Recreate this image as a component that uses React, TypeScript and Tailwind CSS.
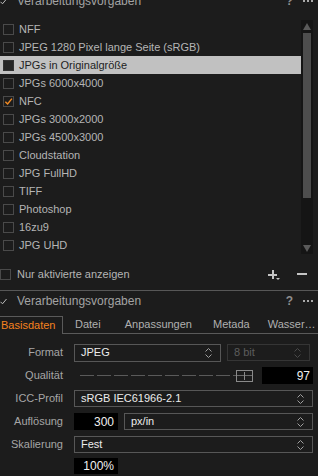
import React from "react";

const presets = [
  "NFF",
  "JPEG 1280 Pixel lange Seite (sRGB)",
  "JPGs in Originalgröße",
  "JPGs 6000x4000",
  "NFC",
  "JPGs 3000x2000",
  "JPGs 4500x3000",
  "Cloudstation",
  "JPG FullHD",
  "TIFF",
  "Photoshop",
  "16zu9",
  "JPG UHD",
];

function Check({ color = "#f08a24", className = "" }: { color?: string; className?: string }) {
  return (
    <svg viewBox="0 0 10 10" className={className}>
      <path d="M1.5 5.2 L4 7.8 L8.8 1.8" fill="none" stroke={color} strokeWidth="1.6" />
    </svg>
  );
}

function Chevrons({ color = "#9a9a9a" }: { color?: string }) {
  return (
    <svg viewBox="0 0 9 12" className="w-[9px] h-[12px]">
      <path d="M1.5 4.5 L4.5 1.5 L7.5 4.5" fill="none" stroke={color} strokeWidth="1" />
      <path d="M1.5 7.5 L4.5 10.5 L7.5 7.5" fill="none" stroke={color} strokeWidth="1" />
    </svg>
  );
}

function PanelHeader() {
  return (
    <div className="flex items-center h-[20px] shrink-0">
      <svg viewBox="0 0 7 7" className="w-[7px] h-[7px]">
        <path d="M0.5 3.8 L2.5 5.8 L6.5 1" fill="none" stroke="#bdbdbd" strokeWidth="1" />
      </svg>
      <span className="ml-[10px] text-[12px] text-[#a3a3a3]">Verarbeitungsvorgaben</span>
      <span className="ml-auto text-[12px] font-bold text-[#8e8e8e] mr-[10px]">?</span>
      <span className="flex gap-[2px] mr-[5px]">
        <span className="w-[2px] h-[2px] bg-[#aaaaaa]" />
        <span className="w-[2px] h-[2px] bg-[#aaaaaa]" />
        <span className="w-[2px] h-[2px] bg-[#aaaaaa]" />
      </span>
    </div>
  );
}

function Select({ value, className = "", disabled = false }: { value: string; className?: string; disabled?: boolean }) {
  return (
    <div
      className={`flex items-center h-[17px] border pl-[6px] pr-[7px] ${
        disabled ? "border-[#353535] text-[#5c5c5c]" : "border-[#575757] text-[#ececec]"
      } ${className}`}
    >
      <span className="text-[11px]">{value}</span>
      <span className="ml-auto flex">
        <Chevrons color={disabled ? "#4a4a4a" : "#a0a0a0"} />
      </span>
    </div>
  );
}

function Row({ label, children }: { label: string; children: React.ReactNode }) {
  return (
    <div className="flex items-center h-[17px]">
      <span className="w-[63px] text-right text-[11px] text-[#a6a6a6] shrink-0">{label}</span>
      <div className="ml-[11px] flex-1 flex items-center gap-[6px]">{children}</div>
    </div>
  );
}

export default function App() {
  return (
    <div className="w-[318px] h-[476px] overflow-hidden bg-[#1c1c1c] font-['Liberation_Sans',Arial,sans-serif] select-none flex flex-col">
      {/* top panel, header scrolled partly out of view */}
      <div className="-mt-[9px]">
        <PanelHeader />
      </div>
      <div className="flex mt-[9px] h-[234px] shrink-0">
        <div className="flex-1 flex flex-col">
          {presets.map((p, i) => {
            const selected = i === 2;
            const checked = i === 4;
            return (
              <div
                key={p}
                className={`flex items-center h-[18px] ${selected ? "bg-[#c1c1c1] text-[#1e1e1e]" : "text-[#b5b5b5]"}`}
              >
                <span
                  className={`ml-[3px] w-[11px] h-[11px] border flex items-center justify-center ${
                    selected ? "bg-[#262626] border-[#333333]" : "border-[#4a4a4a]"
                  }`}
                >
                  {checked && <Check className="w-[9px] h-[9px]" />}
                </span>
                <span className="ml-[5px] text-[11px] whitespace-nowrap">{p}</span>
              </div>
            );
          })}
        </div>
        {/* scrollbar */}
        <div className="w-[12px] mr-[5px] bg-[#151515] flex flex-col items-center">
          <svg viewBox="0 0 8 7" className="w-[8px] h-[7px] mt-[3px]">
            <path d="M4 0 L8 7 L0 7 Z" fill="#5a5a5a" />
          </svg>
          <div className="w-[8px] h-[165px] mt-[3px] bg-[#4d4d4d]" />
          <svg viewBox="0 0 8 7" className="w-[8px] h-[7px] mt-auto mb-[2px]">
            <path d="M0 0 L8 0 L4 7 Z" fill="#5a5a5a" />
          </svg>
        </div>
      </div>
      <div className="flex items-center h-[14px] mt-[13px]">
        <span className="w-[11px] h-[11px] border border-[#4a4a4a]" />
        <span className="ml-[6px] text-[11px] text-[#b5b5b5]">Nur aktivierte anzeigen</span>
        <span className="ml-auto relative w-[9px] h-[9px] mr-[20px]">
          <span className="absolute left-[4px] top-0 w-[2px] h-[9px] bg-[#c4c4c4]" />
          <span className="absolute left-0 top-[4px] w-[9px] h-[2px] bg-[#c4c4c4]" />
          <svg viewBox="0 0 4 2" className="absolute left-[8px] top-[8px] w-[4px] h-[2px]">
            <path d="M0 0 L4 0 L2 2 Z" fill="#c4c4c4" />
          </svg>
        </span>
        <span className="w-[10px] h-[2px] bg-[#c4c4c4] mr-[11px]" />
      </div>
      <div className="h-px bg-[#575757] mt-[9px] shrink-0" />

      {/* bottom panel */}
      <PanelHeader />
      <div className="flex mt-[5px] h-[18px] border-b border-[#5a5a5a] text-[11px] text-[#b0b0b0] shrink-0">
        <div className="w-[63px] -mb-px bg-[#1c1c1c] border-t border-r border-[#5a5a5a] pl-[1px] flex items-center text-[#f5821f]">
          Basisdaten
        </div>
        <div className="pl-[12px] flex items-center">Datei</div>
        <div className="pl-[24px] flex items-center">Anpassungen</div>
        <div className="pl-[21px] flex items-center">Metada</div>
        <div className="pl-[18px] flex items-center whitespace-nowrap">Wasser…</div>
      </div>

      <div className="flex flex-col gap-[6px] mt-[10px] pr-[5px]">
        <Row label="Format">
          <Select value="JPEG" className="w-[147px] h-[18px]" />
          <Select value="8 bit" className="flex-1 mr-[3px]" disabled />
        </Row>
        <Row label="Qualität">
          <div className="flex-1 flex items-center ml-[6px] relative h-[17px]">
            <div className="flex gap-[3px] w-[156px] overflow-hidden">
              {Array.from({ length: 10 }).map((_, i) => (
                <span key={i} className="w-[14px] h-px bg-[#5a5a5a] shrink-0" />
              ))}
            </div>
            <div className="w-[17px] h-[12px] border border-[#8a8a8a] relative flex items-center justify-center">
              <span className="absolute w-[15px] h-px bg-[#6a6a6a]" />
              <span className="absolute w-px h-[8px] bg-[#8a8a8a]" />
            </div>
          </div>
          <div className="w-[51px] h-[17px] bg-black text-[#f0f0f0] text-[12px] flex items-center justify-end pr-[3px]">
            97
          </div>
        </Row>
        <Row label="ICC-Profil">
          <Select value="sRGB IEC61966-2.1" className="flex-1" />
        </Row>
        <Row label="Auflösung">
          <div className="w-[44px] h-[17px] bg-black text-[#f0f0f0] text-[12px] flex items-center justify-end pr-[4px]">
            300
          </div>
          <Select value="px/in" className="flex-1" />
        </Row>
        <Row label="Skalierung">
          <Select value="Fest" className="flex-1" />
        </Row>
        <div className="flex h-[16px] -mt-[1px]">
          <div className="ml-[74px] w-[44px] h-[16px] bg-black text-[#f0f0f0] text-[12px] flex items-center justify-end pr-[4px]">
            100%
          </div>
        </div>
      </div>
    </div>
  );
}
